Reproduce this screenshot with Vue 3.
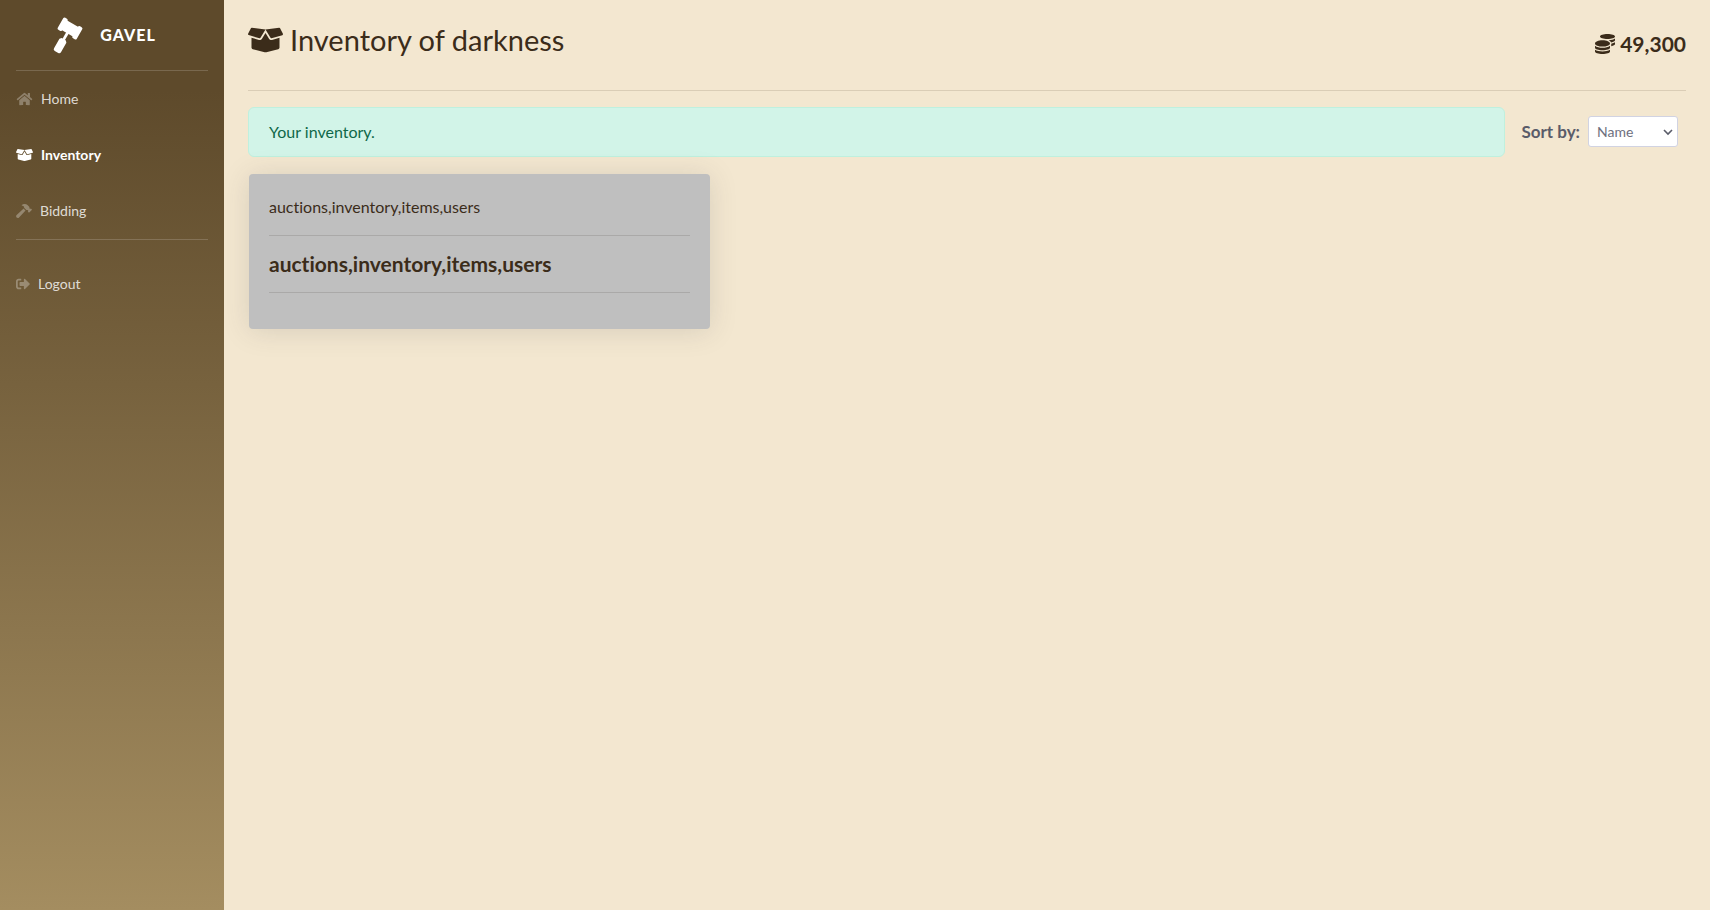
<script setup>
import { ref } from 'vue'

const icons = {
  home: {
    box: '0 0 576 512',
    d: 'M280.37 148.26L96 300.11V464a16 16 0 0 0 16 16l112.06-.29a16 16 0 0 0 15.92-16V368a16 16 0 0 1 16-16h64a16 16 0 0 1 16 16v95.64a16 16 0 0 0 16 16.05L464 480a16 16 0 0 0 16-16V300L295.67 148.26a12.19 12.19 0 0 0-15.3 0zM571.6 251.47L488 182.56V44.05a12 12 0 0 0-12-12h-56a12 12 0 0 0-12 12v72.61L318.47 43a48 48 0 0 0-61 0L4.34 251.47a12 12 0 0 0-1.6 16.9l25.5 31A12 12 0 0 0 45.15 301l235.22-193.74a12.19 12.19 0 0 1 15.3 0L530.9 301a12 12 0 0 0 16.9-1.6l25.5-31a12 12 0 0 0-1.7-16.93z',
  },
  box: {
    box: '0 0 640 512',
    d: 'M425.7 256c-16.9 0-32.8-9-41.4-23.4L320 126l-64.2 106.6c-8.7 14.5-24.6 23.5-41.5 23.5-4.5 0-9-.6-13.3-1.9L64 215v178c0 14.7 10 27.5 24.2 31l216.2 54.1c10.2 2.5 20.9 2.5 31 0L551.8 424c14.2-3.6 24.2-16.4 24.2-31V215l-137 39.1c-4.3 1.3-8.8 1.9-13.3 1.9zm212.6-112.2L586.8 41c-3.1-6.2-9.8-9.8-16.7-8.9L320 64l91.7 152.1c3.8 6.3 11.4 9.3 18.5 7.3l197.9-56.5c9.9-2.9 14.7-13.9 10.2-23.1zM53.2 41L1.7 143.8c-4.6 9.2.3 20.2 10.1 23l197.9 56.5c7.1 2 14.7-1 18.5-7.3L320 64 69.8 32.1c-6.9-.8-13.5 2.7-16.6 8.9z',
  },
  hammer: {
    box: '0 0 576 512',
    d: 'M571.31 193.94l-22.63-22.63c-6.25-6.25-16.38-6.25-22.63 0l-11.31 11.31-28.9-28.9c5.63-21.31.36-44.9-16.35-61.61l-45.25-45.25c-62.48-62.48-163.79-62.48-226.28 0l90.51 45.25v18.75c0 16.97 6.74 33.25 18.75 45.25l49.14 49.14c16.71 16.71 40.3 21.98 61.61 16.35l28.9 28.9-11.31 11.31c-6.25 6.25-6.25 16.38 0 22.63l22.63 22.63c6.25 6.25 16.38 6.25 22.63 0l90.51-90.51c6.23-6.24 6.23-16.37-.02-22.62zm-286.72-15.2c-3.7-3.7-6.84-7.79-9.85-11.95L19.64 404.96c-25.57 23.88-26.26 64.19-1.53 88.93s65.05 24.05 88.92-1.53l238.13-255.07c-3.96-2.91-7.9-5.87-11.44-9.41l-49.13-49.14z',
  },
  logout: {
    box: '0 0 512 512',
    d: 'M497 273L329 441c-15 15-41 4.5-41-17v-96H152c-13.3 0-24-10.7-24-24v-96c0-13.3 10.7-24 24-24h136V88c0-21.4 25.9-32 41-17l168 168c9.3 9.4 9.3 24.6 0 34zM192 436v-40c0-6.6-5.4-12-12-12H96c-17.7 0-32-14.3-32-32V160c0-17.7 14.3-32 32-32h84c6.6 0 12-5.4 12-12V76c0-6.6-5.4-12-12-12H96c-53 0-96 43-96 96v192c0 53 43 96 96 96h84c6.6 0 12-5.4 12-12z',
  },
  coins: {
    box: '0 0 512 512',
    d: 'M0 405.3V448c0 35.3 86 64 192 64s192-28.7 192-64v-42.7C342.7 434.4 267.2 448 192 448S41.3 434.4 0 405.3zM320 128c106 0 192-28.7 192-64S426 0 320 0 128 28.7 128 64s86 64 192 64zM0 300.4V352c0 35.3 86 64 192 64s192-28.7 192-64v-51.6c-41.3 34-116.9 51.6-192 51.6S41.3 334.4 0 300.4zm416 11c57.3-11.1 96-31.7 96-55.4v-42.7c-23.2 16.4-57.3 27.6-96 34.5v63.6zM192 160C86 160 0 195.8 0 240s86 80 192 80 192-35.8 192-80-86-80-192-80zm219.3 56.3c60-10.8 100.7-32 100.7-56.3v-42.7c-35.5 25.1-96.5 38.6-160.7 41.8 29.5 14.3 51.2 33.5 60 57.2z',
  },
}

const links = [
  { label: 'Home', icon: icons.home, size: 'wide', active: false },
  { label: 'Inventory', icon: icons.box, size: 'wide', active: true },
  { label: 'Bidding', icon: icons.hammer, size: 'medium', active: false },
]

const items = [{ name: 'auctions,inventory,items,users', title: 'auctions,inventory,items,users' }]
const sort = ref('name')
</script>

<template>
  <div class="layout">
    <nav class="sidebar">
      <a class="brand" href="#">
        <svg class="gavel" viewBox="0 0 32 40" aria-hidden="true">
          <g transform="translate(18 13.5) rotate(30)">
            <rect x="-11" y="-7" width="5" height="14" rx="1.6" />
            <rect x="6" y="-7" width="5" height="14" rx="1.6" />
            <rect x="-8" y="-5.6" width="16" height="11.2" />
            <rect x="-1.4" y="4" width="2.8" height="10" />
            <path d="M-2.4 12.4H2.4L4 14.2V25a2 2 0 0 1-2 2H-2a2 2 0 0 1-2-2V14.2Z" />
          </g>
        </svg>
        <span>GAVEL</span>
      </a>
      <hr />
      <ul>
        <li v-for="link in links" :key="link.label">
          <a class="link" :class="{ active: link.active }" href="#">
            <svg :class="link.size" :viewBox="link.icon.box" aria-hidden="true"><path :d="link.icon.d" /></svg>
            <span>{{ link.label }}</span>
          </a>
        </li>
      </ul>
      <hr class="last" />
      <a class="link" href="#">
        <svg class="small" :viewBox="icons.logout.box" aria-hidden="true"><path :d="icons.logout.d" /></svg>
        <span>Logout</span>
      </a>
    </nav>

    <main>
      <header>
        <h1>
          <svg :viewBox="icons.box.box" aria-hidden="true"><path :d="icons.box.d" /></svg>
          <span>Inventory of darkness</span>
        </h1>
        <div class="coins">
          <svg :viewBox="icons.coins.box" aria-hidden="true"><path :d="icons.coins.d" /></svg>
          <span>49,300</span>
        </div>
      </header>

      <div class="toolbar">
        <div class="alert" role="status">Your inventory.</div>
        <form class="sort" @submit.prevent>
          <label for="sort">Sort by:</label>
          <div class="select">
            <select id="sort" v-model="sort">
              <option value="name">Name</option>
              <option value="quantity">Quantity</option>
            </select>
            <svg viewBox="0 0 10 8" aria-hidden="true"><path d="M1 2l4 4 4-4" /></svg>
          </div>
        </form>
      </div>

      <div class="cards">
        <article v-for="item in items" :key="item.name">
          <p>{{ item.name }}</p>
          <hr />
          <h2>{{ item.title }}</h2>
          <hr />
        </article>
      </div>
    </main>
  </div>
</template>

<style>
body {
  margin: 0;
  background: #f3e7d0;
}
</style>

<style scoped>
* {
  box-sizing: border-box;
}
.layout {
  display: flex;
  min-height: 100vh;
  font-family: Lato, "Open Sans", sans-serif;
  font-size: 16px;
  line-height: 24px;
  font-variant-ligatures: none;
  color: #3b2c1a;
}
svg {
  fill: currentColor;
  flex: none;
}
a {
  text-decoration: none;
}
.sidebar {
  flex: none;
  width: 224px;
  background: linear-gradient(180deg, #5e4a2b 10%, #a48d60 100%);
}
.brand {
  display: flex;
  align-items: center;
  justify-content: center;
  gap: 16px;
  height: 70px;
  padding-right: 16px;
  color: #fff;
  font-weight: 900;
  letter-spacing: 1px;
}
.gavel {
  width: 32px;
  height: 40px;
}
.sidebar hr {
  height: 1px;
  margin: 0 16px;
  border: 0;
  background: rgba(255, 255, 255, 0.17);
}
.sidebar .last {
  margin-bottom: 16px;
}
.sidebar ul {
  margin: 0;
  padding: 0;
  list-style: none;
}
.link {
  display: flex;
  align-items: center;
  gap: 8px;
  padding: 16px;
  font-size: 14px;
  color: rgba(255, 255, 255, 0.8);
}
.link svg {
  height: 14px;
  fill: rgba(255, 255, 255, 0.3);
}
.link.active {
  color: #fff;
  font-weight: 700;
}
.link.active svg {
  fill: #fff;
}
.small {
  width: 14px;
}
.medium {
  width: 16px;
}
.wide {
  width: 17px;
}
main {
  flex: 1;
  min-width: 0;
  padding: 24px;
}
header {
  display: flex;
  align-items: flex-start;
  justify-content: space-between;
  height: 67px;
  border-bottom: 1px solid #dacdb6;
}
h1 {
  display: flex;
  align-items: center;
  gap: 7px;
  margin: 0;
  font-size: 29px;
  line-height: 32px;
  font-weight: 400;
}
h1 svg {
  width: 35px;
  height: 28px;
}
.coins {
  display: flex;
  align-items: center;
  gap: 5px;
  padding-top: 8px;
  font-size: 21px;
  font-weight: 700;
}
.coins svg {
  width: 20px;
  height: 20px;
}
.toolbar {
  display: flex;
  align-items: center;
  margin: 16px 0;
}
.alert {
  flex: 1;
  padding: 12px 20px;
  border: 1px solid #bff0de;
  border-radius: 6px;
  background: #d2f4e8;
  color: #0f6848;
}
.sort {
  display: flex;
  align-items: center;
  gap: 8px;
  padding: 0 8px 1px 16px;
}
.sort label {
  font-size: 17px;
  font-weight: 700;
  color: #5a5c69;
}
.select {
  position: relative;
  width: 90px;
}
select {
  display: block;
  width: 100%;
  height: 31px;
  padding: 0 8px;
  border: 1px solid #d1d3e2;
  border-radius: 3px;
  appearance: none;
  background: #fff;
  color: #6e707e;
  font: inherit;
  font-size: 14px;
}
.select svg {
  position: absolute;
  top: 12px;
  right: 5px;
  width: 10px;
  height: 8px;
  fill: none;
  stroke: #5a5c69;
  stroke-width: 1.6;
  pointer-events: none;
}
.cards {
  display: grid;
  grid-template-columns: repeat(3, 1fr);
  gap: 26px;
  padding: 1px;
}
article {
  padding: 21px 20px 36px;
  border-radius: 4px;
  background: #bfbfbf;
  box-shadow: 0 2px 28px rgba(58, 59, 69, 0.15);
}
article p,
article h2 {
  margin: 0;
}
article h2 {
  font-size: 21px;
  line-height: 24px;
  font-weight: 700;
}
article hr {
  height: 1px;
  margin: 16px 0;
  border: 0;
  background: #aaa9a8;
}
article hr:last-child {
  margin-bottom: 0;
}
</style>
